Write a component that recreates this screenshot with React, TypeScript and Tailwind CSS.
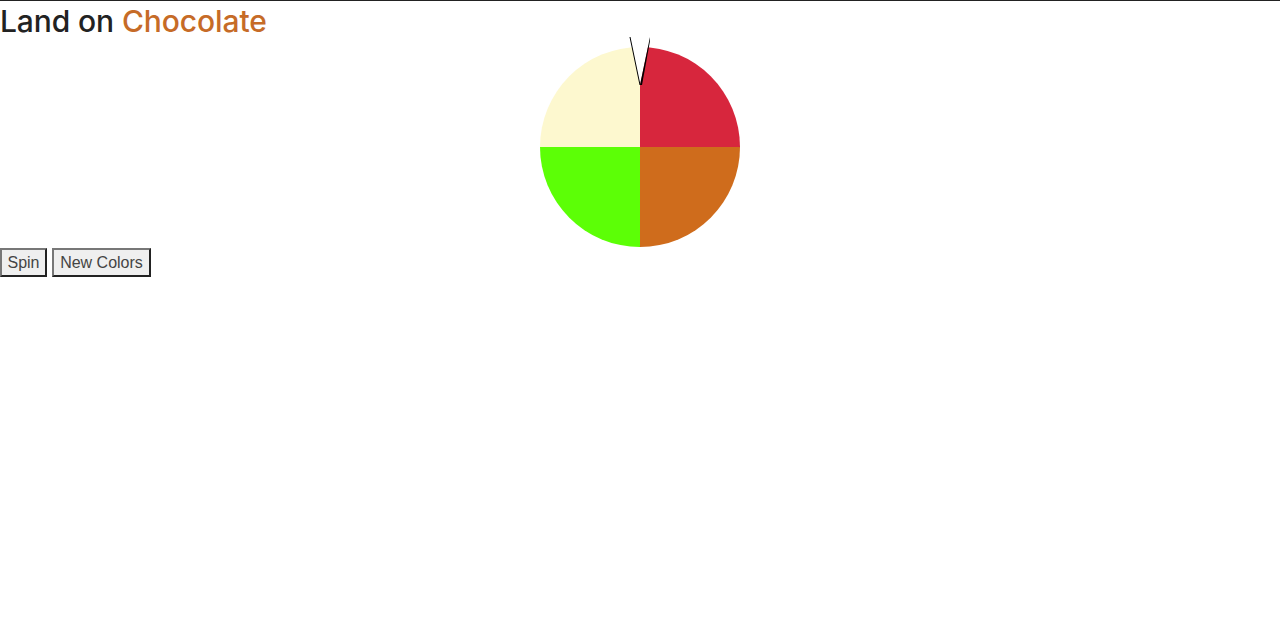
import React from "react";

const slices = [
  { color: "#d7263d", d: "M100 100 L100 0 A100 100 0 0 1 200 100 Z" },
  { color: "#cf6c1c", d: "M100 100 L200 100 A100 100 0 0 1 100 200 Z" },
  { color: "#5cff06", d: "M100 100 L100 200 A100 100 0 0 1 0 100 Z" },
  { color: "#fdf8cf", d: "M100 100 L0 100 A100 100 0 0 1 100 0 Z" },
];

export default function App() {
  return (
    <div className="min-h-[640px] border-t border-[#222] bg-white font-['Inter','Liberation_Sans',sans-serif]">
      <h1 className="h-[37px] text-[30px] font-medium leading-[42px] text-[#222] -mt-[1px] tracking-[-0.1px]">
        Land on <span className="text-[#c66b27]">Chocolate</span>
      </h1>

      {/* Wheel */}
      <div className="flex justify-center">
        <div className="relative h-[211px] w-[200px] pt-[10px]">
          <svg width="200" height="200" viewBox="0 0 200 200" className="block">
            {slices.map((s) => (
              <path key={s.color} d={s.d} fill={s.color} />
            ))}
          </svg>
          {/* Pointer */}
          <svg
            width="22"
            height="50"
            viewBox="0 0 22 50"
            className="absolute left-[89px] top-0"
          >
            <polygon points="1,0 21,0 11,48" fill="#fff" />
            <line x1="1" y1="0" x2="11" y2="48" stroke="#000" strokeWidth="1" />
            <polygon points="21,0 11,48 13,48 21,4" fill="#000" />
          </svg>
        </div>
      </div>

      <div className="flex gap-[5px] font-['Liberation_Sans',sans-serif] text-[16px] text-[#444]">
        <button className="h-[29px] w-[47px] border-2 border-[#777] bg-[#efefef] [border-style:outset]">
          Spin
        </button>
        <button className="h-[29px] w-[99px] border-2 border-[#777] bg-[#efefef] [border-style:outset]">
          New Colors
        </button>
      </div>
    </div>
  );
}
